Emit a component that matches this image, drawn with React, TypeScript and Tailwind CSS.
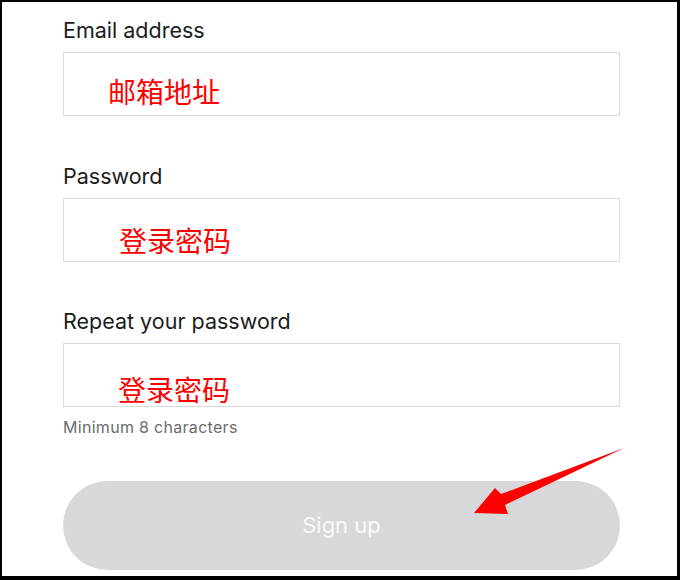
import React from 'react';

const fields = [
  { id: 'email', label: 'Email address', note: '邮箱地址', noteClass: 'left-[44px] top-[24px]' },
  { id: 'password', label: 'Password', note: '登录密码', noteClass: 'left-[55px] top-[27px]' },
  { id: 'repeat', label: 'Repeat your password', note: '登录密码', noteClass: 'left-[54px] top-[31px]' },
];

const App: React.FC = () => {
  return (
    <div className="relative w-[680px] h-[580px] overflow-hidden bg-white border-black border-t-2 border-l-2 border-r-[3px] border-b-[4px] font-['Inter',sans-serif]">
      <div className="flex flex-col pl-[61px] pt-[14px] w-[618px]">
        {fields.map((field, i) => (
          <div key={field.id} className={i > 0 ? 'mt-[45.5px]' : ''}>
            <label className="block text-[21.5px] leading-[28px] text-[#1c1c1c] mb-2">{field.label}</label>
            {/* input box with the red annotation drawn over it */}
            <div className="relative h-[64px] border border-[#dcdcdc] bg-white">
              <span
                className={`absolute ${field.noteClass} text-[28px] leading-[28px] text-[#ff0000] whitespace-nowrap font-['Noto_Sans_CJK_SC',sans-serif]`}
              >
                {field.note}
              </span>
            </div>
          </div>
        ))}

        <p className="mt-[10px] text-[16px] leading-[20px] tracking-[0.3px] text-[#6b6b6b]">Minimum 8 characters</p>

        <button
          type="button"
          className="mt-[44px] h-[89px] w-[557px] rounded-full bg-[#d8d8da] text-[22px] text-[#f9f9f9] flex items-center justify-center"
        >
          Sign up
        </button>
      </div>

      {/* red arrow annotation */}
      <svg className="absolute left-[-2px] top-[-2px] pointer-events-none" width="680" height="580" viewBox="0 0 680 580">
        <polygon points="624,448 501,494 495,488 474,513 508,514 505,505" fill="#ff0000" />
      </svg>
    </div>
  );
};

export default App;
